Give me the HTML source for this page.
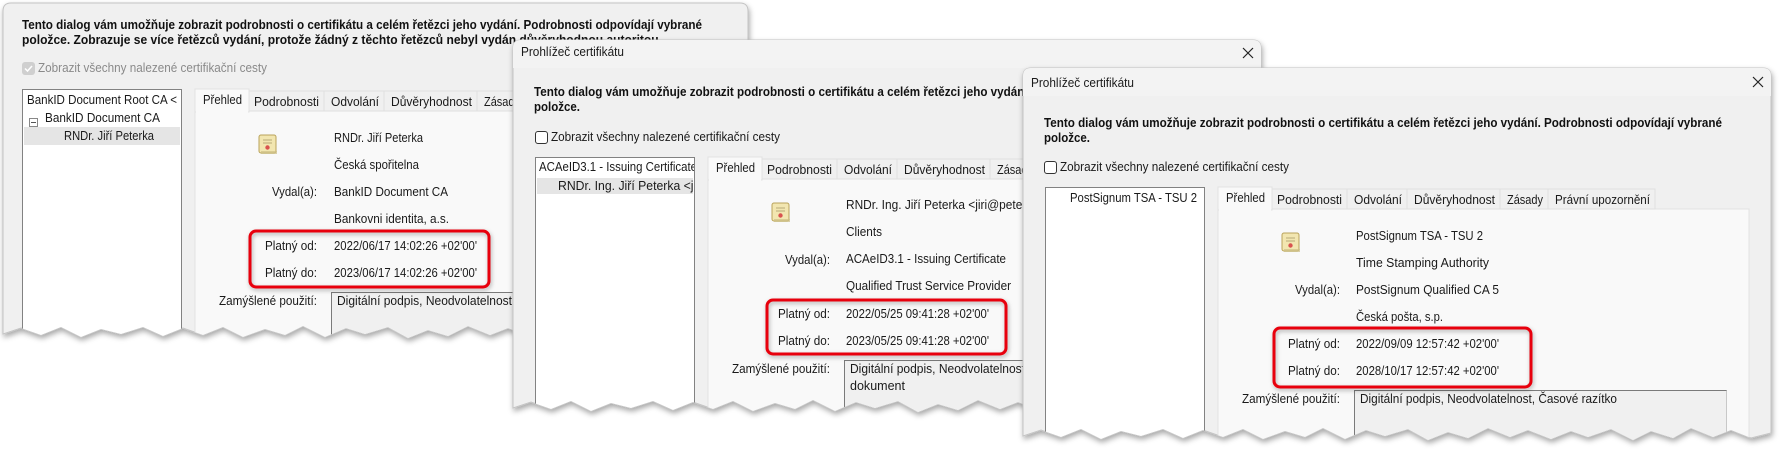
<!DOCTYPE html>
<html><head><meta charset="utf-8"><style>
html,body{margin:0;padding:0;background:#fff;width:1789px;height:456px;overflow:hidden}
svg{display:block}
text{font-family:"Liberation Sans",sans-serif;fill:#1a1a1a;font-size:12.5px}
.b{font-weight:bold;font-size:13px;fill:#111}
.g{fill:#8a8a8a}
</style></head><body>
<svg width="1789" height="456" viewBox="0 0 1789 456" xmlns="http://www.w3.org/2000/svg">
<defs>
<filter id="sh" x="-5%" y="-5%" width="110%" height="112%">
<feDropShadow dx="1" dy="3" stdDeviation="3" flood-color="#000" flood-opacity="0.35"/>
</filter>
<filter id="rs" x="-10%" y="-20%" width="120%" height="140%">
<feDropShadow dx="1" dy="2" stdDeviation="2" flood-color="#000" flood-opacity="0.3"/>
</filter>
<path id="o1" d="M0,41 Q0,33 8,33 H737 Q745,33 745,41 V362 L725,366 L705,358 L690,364 L668,356 L650,366 L628,360 L610,368 L588,357 L565,365 L548,359 L528,367 L505,358 L487,365 L465,356 L445,366 L425,360 L405,368 L385,357 L362,364 L343,358 L322,367 L300,356 L282,365 L262,359 L240,367 L220,357 L200,365 L180,358 L160,366 L140,357 L118,364 L98,359 L78,367 L58,357 L38,365 L18,358 L0,364 Z"/>
<path id="o2" d="M0,8 Q0,0 8,0 H740 Q748,0 748,8 V365 L728,370 L708,362 L690,369 L668,360 L650,370 L628,363 L610,372 L588,361 L565,369 L548,363 L528,371 L505,362 L487,369 L465,360 L445,370 L425,364 L405,372 L385,361 L362,368 L343,362 L322,371 L300,360 L282,369 L262,363 L240,371 L220,361 L200,369 L180,362 L160,370 L140,361 L118,368 L98,363 L78,371 L58,361 L38,369 L18,362 L0,368 Z"/>
<clipPath id="c1"><use href="#o1"/></clipPath>
<clipPath id="c2"><use href="#o2"/></clipPath>
<clipPath id="lb"><rect x="23" y="120" width="158" height="300"/></clipPath>
<g id="icon">
<rect x="1" y="1" width="17" height="18" rx="2" fill="#f2e6b0" stroke="#b9a35a"/>
<rect x="3" y="17" width="16" height="3" fill="#cdbf86" opacity=".7"/>
<line x1="5" y1="6" x2="14" y2="6" stroke="#b8a978"/>
<line x1="5" y1="9" x2="14" y2="9" stroke="#b8a978"/>
<circle cx="9.5" cy="13.5" r="2.2" fill="#d9534f"/>
</g>
<g id="tabs">
<rect x="195" y="141" width="531" height="300" fill="#f9f9f9" stroke="#e2e2e2"/>
<rect x="249" y="121" width="75" height="20" fill="#f0f0f0" stroke="#e0e0e0"/>
<rect x="324" y="121" width="60" height="20" fill="#f0f0f0" stroke="#e0e0e0"/>
<rect x="384" y="121" width="93" height="20" fill="#f0f0f0" stroke="#e0e0e0"/>
<rect x="477" y="121" width="48" height="20" fill="#f0f0f0" stroke="#e0e0e0"/>
<rect x="525" y="121" width="107" height="20" fill="#f0f0f0" stroke="#e0e0e0"/>
<rect x="195" y="119" width="54" height="23" fill="#f9f9f9" stroke="#e2e2e2"/>
<rect x="196" y="140" width="52" height="3" fill="#f9f9f9"/>
<text x="203" y="134" textLength="39" lengthAdjust="spacingAndGlyphs">Přehled</text>
<text x="254" y="136" textLength="65" lengthAdjust="spacingAndGlyphs">Podrobnosti</text>
<text x="331" y="136" textLength="48" lengthAdjust="spacingAndGlyphs">Odvolání</text>
<text x="391" y="136" textLength="81" lengthAdjust="spacingAndGlyphs">Důvěryhodnost</text>
<text x="484" y="136" textLength="36" lengthAdjust="spacingAndGlyphs">Zásady</text>
<text x="532" y="136" textLength="95" lengthAdjust="spacingAndGlyphs">Právní upozornění</text>
<use href="#icon" x="258" y="164"/>
<text x="317" y="226" text-anchor="end" textLength="45" lengthAdjust="spacingAndGlyphs">Vydal(a):</text>
<text x="317" y="280" text-anchor="end" textLength="52" lengthAdjust="spacingAndGlyphs">Platný od:</text>
<text x="317" y="307" text-anchor="end" textLength="52" lengthAdjust="spacingAndGlyphs">Platný do:</text>
<text x="317" y="335" text-anchor="end" textLength="98" lengthAdjust="spacingAndGlyphs">Zamýšlené použití:</text>
<rect x="331.5" y="322.5" width="372" height="100" fill="#f0f0f0" stroke="#c8c8c8"/>
<path d="M331.5,423 V322.5 H703.5" fill="none" stroke="#7a7a7a"/>
<rect x="22.5" y="119.5" width="159" height="320" fill="#fff" stroke="#828282"/>
</g>
</defs>

<!-- Dialog 1 -->
<g transform="translate(3,-30)">
<use href="#o1" fill="#f0f0f0" stroke="#c4c4c4" filter="url(#sh)"/>
<g clip-path="url(#c1)">
<text class="b" x="19" y="59" textLength="680" lengthAdjust="spacingAndGlyphs">Tento dialog vám umožňuje zobrazit podrobnosti o certifikátu a celém řetězci jeho vydání. Podrobnosti odpovídají vybrané</text>
<text class="b" x="19" y="74" textLength="640" lengthAdjust="spacingAndGlyphs">položce. Zobrazuje se více řetězců vydání, protože žádný z těchto řetězců nebyl vydán důvěryhodnou autoritou.</text>
<rect x="19" y="92" width="13" height="13" rx="3" fill="#cfcfcf"/>
<path d="M22,98.5 l2.5,2.5 l4.5,-5" fill="none" stroke="#fff" stroke-width="1.5"/>
<text class="g" x="35" y="102" textLength="229" lengthAdjust="spacingAndGlyphs">Zobrazit všechny nalezené certifikační cesty</text>
<g transform="translate(-3,0)"><use href="#tabs"/></g>
<g transform="translate(-3,0)">
<g clip-path="url(#lb)">
<text x="27" y="134" textLength="150" lengthAdjust="spacingAndGlyphs">BankID Document Root CA &lt;</text>
<rect x="29.5" y="148.5" width="8" height="8" fill="#fff" stroke="#888"/>
<line x1="31" y1="152.5" x2="36" y2="152.5" stroke="#555"/>
<text x="45" y="152" textLength="115" lengthAdjust="spacingAndGlyphs">BankID Document CA</text>
<rect x="24" y="157" width="156" height="18" fill="#e5e5e5"/>
<text x="64" y="170" textLength="90" lengthAdjust="spacingAndGlyphs">RNDr. Jiří Peterka</text>
</g>
<text x="334" y="172" textLength="89" lengthAdjust="spacingAndGlyphs">RNDr. Jiří Peterka</text>
<text x="334" y="199" textLength="85" lengthAdjust="spacingAndGlyphs">Česká spořitelna</text>
<text x="334" y="226" textLength="114" lengthAdjust="spacingAndGlyphs">BankID Document CA</text>
<text x="334" y="253" textLength="115" lengthAdjust="spacingAndGlyphs">Bankovni identita, a.s.</text>
<text x="334" y="280" textLength="143" lengthAdjust="spacingAndGlyphs">2022/06/17 14:02:26 +02'00'</text>
<text x="334" y="307" textLength="143" lengthAdjust="spacingAndGlyphs">2023/06/17 14:02:26 +02'00'</text>
<text x="337" y="335" textLength="175" lengthAdjust="spacingAndGlyphs">Digitální podpis, Neodvolatelnost</text>
<rect x="250" y="261" width="239" height="56" rx="6" fill="none" stroke="#e8000b" stroke-width="3" filter="url(#rs)"/>
</g>
</g>
</g>

<!-- Dialog 2 -->
<g transform="translate(513,40)">
<use href="#o2" fill="#f0f0f0" stroke="#c4c4c4" filter="url(#sh)"/>
<g clip-path="url(#c2)">
<rect x="0" y="0" width="748" height="28" fill="#f3f3f3"/>
<text x="8" y="16" font-size="12" textLength="103" lengthAdjust="spacingAndGlyphs">Prohlížeč certifikátu</text>
<path d="M730,8 l10,10 M740,8 l-10,10" stroke="#222" stroke-width="1.2"/>
<g transform="translate(0,-2)">
<text class="b" x="21" y="58" textLength="678" lengthAdjust="spacingAndGlyphs">Tento dialog vám umožňuje zobrazit podrobnosti o certifikátu a celém řetězci jeho vydání. Podrobnosti odpovídají vybrané</text>
<text class="b" x="21" y="73" textLength="46" lengthAdjust="spacingAndGlyphs">položce.</text>
<rect x="22.5" y="93.5" width="12" height="12" rx="2.5" fill="#fff" stroke="#333"/>
<text x="38" y="103" textLength="229" lengthAdjust="spacingAndGlyphs">Zobrazit všechny nalezené certifikační cesty</text>
<use href="#tabs"/>
<g clip-path="url(#lb)">
<text x="26" y="133" textLength="158" lengthAdjust="spacingAndGlyphs">ACAeID3.1 - Issuing Certificate</text>
<rect x="24" y="140" width="156" height="16" fill="#e5e5e5"/>
<text x="45" y="152" textLength="145" lengthAdjust="spacingAndGlyphs">RNDr. Ing. Jiří Peterka &lt;jiri</text>
</g>
<text x="333" y="171" textLength="215" lengthAdjust="spacingAndGlyphs">RNDr. Ing. Jiří Peterka &lt;jiri@peterka.cz&gt;</text>
<text x="333" y="198" textLength="36" lengthAdjust="spacingAndGlyphs">Clients</text>
<text x="333" y="225" textLength="160" lengthAdjust="spacingAndGlyphs">ACAeID3.1 - Issuing Certificate</text>
<text x="333" y="252" textLength="165" lengthAdjust="spacingAndGlyphs">Qualified Trust Service Provider</text>
<text x="333" y="280" textLength="143" lengthAdjust="spacingAndGlyphs">2022/05/25 09:41:28 +02'00'</text>
<text x="333" y="307" textLength="143" lengthAdjust="spacingAndGlyphs">2023/05/25 09:41:28 +02'00'</text>
<text x="337" y="335" textLength="175" lengthAdjust="spacingAndGlyphs">Digitální podpis, Neodvolatelnost</text>
<text x="337" y="352" textLength="55" lengthAdjust="spacingAndGlyphs">dokument</text>
<rect x="254" y="262" width="239" height="54" rx="6" fill="none" stroke="#e8000b" stroke-width="3" filter="url(#rs)"/>
</g>
</g>
</g>

<!-- Dialog 3 -->
<g transform="translate(1023,68)">
<use href="#o2" fill="#f0f0f0" stroke="#c4c4c4" filter="url(#sh)"/>
<g clip-path="url(#c2)">
<rect x="0" y="0" width="748" height="28" fill="#f3f3f3"/>
<text x="8" y="19" font-size="12" textLength="103" lengthAdjust="spacingAndGlyphs">Prohlížeč certifikátu</text>
<path d="M730,9 l10,10 M740,9 l-10,10" stroke="#222" stroke-width="1.2"/>
<text class="b" x="21" y="59" textLength="678" lengthAdjust="spacingAndGlyphs">Tento dialog vám umožňuje zobrazit podrobnosti o certifikátu a celém řetězci jeho vydání. Podrobnosti odpovídají vybrané</text>
<text class="b" x="21" y="74" textLength="46" lengthAdjust="spacingAndGlyphs">položce.</text>
<rect x="21.5" y="93.5" width="12" height="12" rx="2.5" fill="#fff" stroke="#333"/>
<text x="37" y="103" textLength="229" lengthAdjust="spacingAndGlyphs">Zobrazit všechny nalezené certifikační cesty</text>
<use href="#tabs"/>
<text x="47" y="134" textLength="127" lengthAdjust="spacingAndGlyphs">PostSignum TSA - TSU 2</text>
<text x="333" y="172" textLength="127" lengthAdjust="spacingAndGlyphs">PostSignum TSA - TSU 2</text>
<text x="333" y="199" textLength="133" lengthAdjust="spacingAndGlyphs">Time Stamping Authority</text>
<text x="333" y="226" textLength="143" lengthAdjust="spacingAndGlyphs">PostSignum Qualified CA 5</text>
<text x="333" y="253" textLength="87" lengthAdjust="spacingAndGlyphs">Česká pošta, s.p.</text>
<text x="333" y="280" textLength="143" lengthAdjust="spacingAndGlyphs">2022/09/09 12:57:42 +02'00'</text>
<text x="333" y="307" textLength="143" lengthAdjust="spacingAndGlyphs">2028/10/17 12:57:42 +02'00'</text>
<text x="337" y="335" textLength="257" lengthAdjust="spacingAndGlyphs">Digitální podpis, Neodvolatelnost, Časové razítko</text>
<rect x="251" y="260" width="257" height="59" rx="6" fill="none" stroke="#e8000b" stroke-width="3" filter="url(#rs)"/>
</g>
</g>
</svg>
</body></html>
